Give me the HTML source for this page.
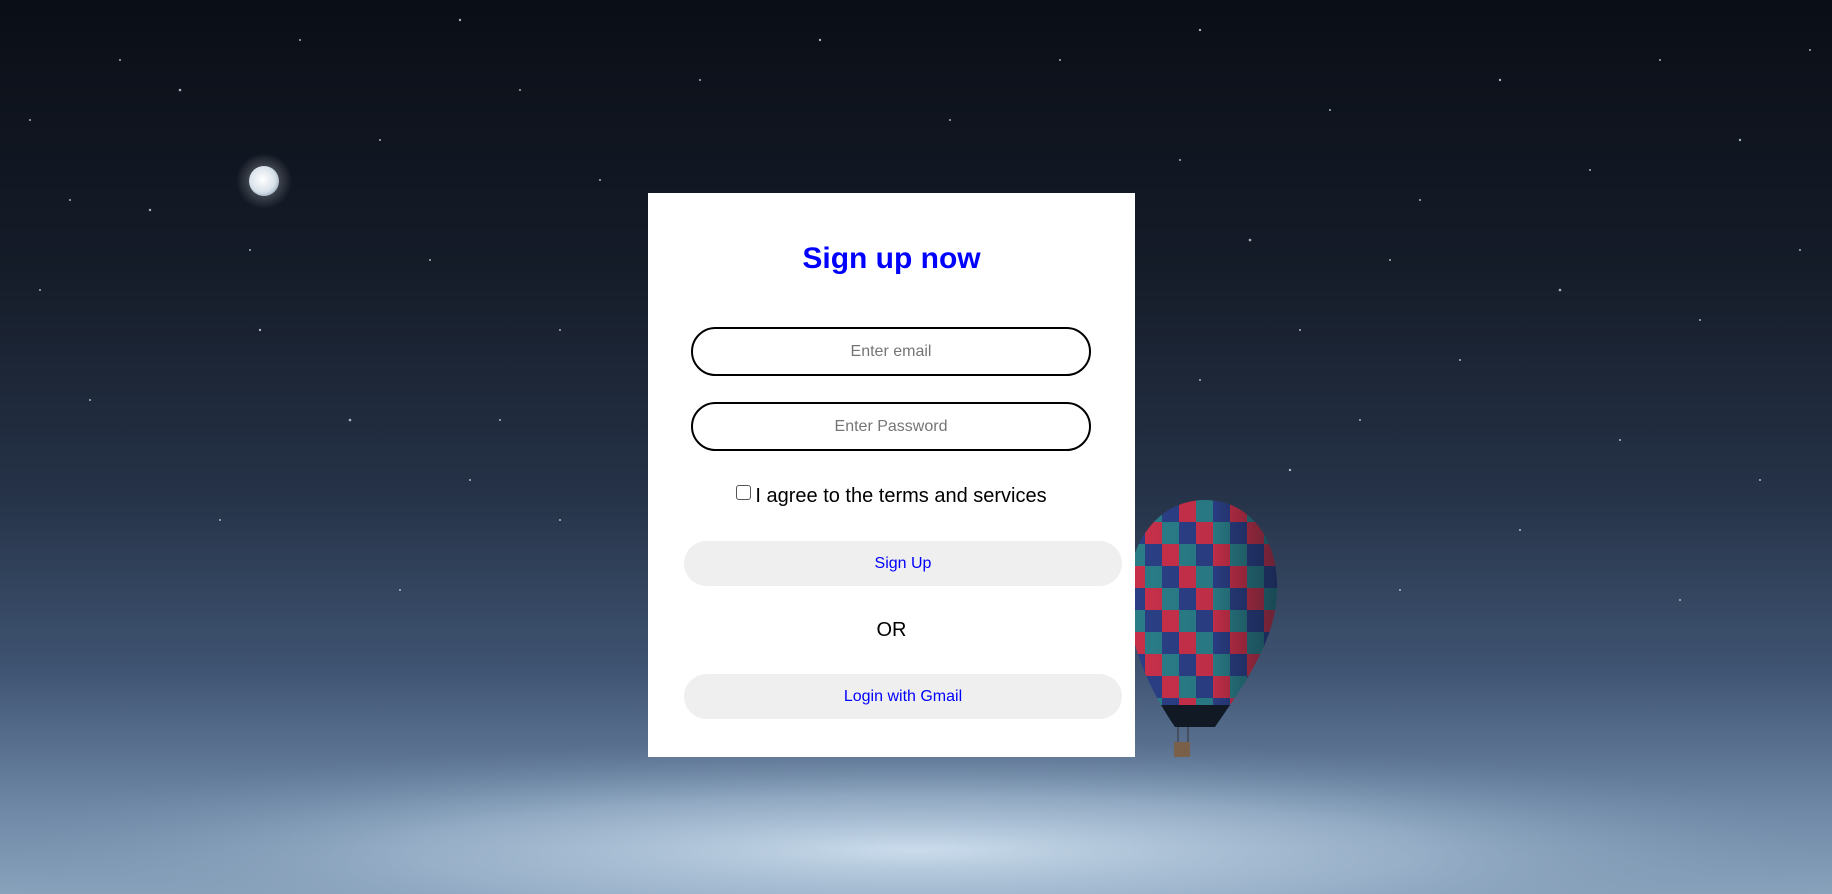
<!DOCTYPE html>
<html><head><meta charset="utf-8"><style>
html,body{margin:0;padding:0;width:1832px;height:894px;overflow:hidden;font-family:"Liberation Sans",Arial,sans-serif}
#bg{position:absolute;left:0;top:0;display:block}
.card{position:absolute;left:648px;top:193px;width:487px;height:564px;background:#fff}
h1{position:absolute;left:0;width:100%;margin:0;text-align:center;color:#0000ff;font-size:30px;font-weight:bold;line-height:36px}
.inp{position:absolute;left:43px;width:396px;height:45px;border:2px solid #000;border-radius:25px;text-align:center;line-height:45px;font-size:16px;color:#757575}
.chk{position:absolute;left:0;width:100%;text-align:center;font-size:20px;color:#000;line-height:24px}
.chk span.b{display:inline-block;width:13px;height:13px;border:1px solid #555;border-radius:3px;vertical-align:2px;margin-right:4px}
.btn{position:absolute;left:36px;width:438px;height:45px;background:#efefef;border-radius:23px;text-align:center;line-height:45px;font-size:16px;color:#0000ff}
.or{position:absolute;left:0;width:100%;top:425px;text-align:center;font-size:20px;line-height:24px;color:#000}
</style></head><body>
<svg id="bg" width="1832" height="894" viewBox="0 0 1832 894">
<defs>
<linearGradient id="sky" x1="0" y1="0" x2="0" y2="1">
<stop offset="0" stop-color="#0a0e16"/>
<stop offset="0.3" stop-color="#151c29"/>
<stop offset="0.55" stop-color="#253247"/>
<stop offset="0.75" stop-color="#3f5472"/>
<stop offset="0.9" stop-color="#6c86a4"/>
<stop offset="1" stop-color="#8aa3bd"/>
</linearGradient>
<radialGradient id="glow" cx="0.5" cy="0.5" r="0.5">
<stop offset="0" stop-color="#cfe0ef" stop-opacity="0.95"/>
<stop offset="0.5" stop-color="#a8bfd5" stop-opacity="0.6"/>
<stop offset="1" stop-color="#6c86a4" stop-opacity="0"/>
</radialGradient>
<radialGradient id="moon" cx="0.45" cy="0.45" r="0.6">
<stop offset="0" stop-color="#ffffff"/>
<stop offset="0.7" stop-color="#d9e2ea"/>
<stop offset="1" stop-color="#9fb0c0"/>
</radialGradient>
<radialGradient id="mglow" cx="0.5" cy="0.5" r="0.5">
<stop offset="0" stop-color="#ffffff" stop-opacity="0.4"/>
<stop offset="1" stop-color="#ffffff" stop-opacity="0"/>
</radialGradient>
<pattern id="chk" x="1128" y="500" width="51" height="66" patternUnits="userSpaceOnUse">
<rect x="0" y="0" width="17" height="22" fill="#c8304a"/><rect x="17" y="0" width="17" height="22" fill="#2a7d88"/><rect x="34" y="0" width="17" height="22" fill="#2b3f86"/>
<rect x="0" y="22" width="17" height="22" fill="#2b3f86"/><rect x="17" y="22" width="17" height="22" fill="#c8304a"/><rect x="34" y="22" width="17" height="22" fill="#2a7d88"/>
<rect x="0" y="44" width="17" height="22" fill="#2a7d88"/><rect x="17" y="44" width="17" height="22" fill="#2b3f86"/><rect x="34" y="44" width="17" height="22" fill="#c8304a"/>
</pattern>
<linearGradient id="shade" x1="0" y1="0" x2="1" y2="0">
<stop offset="0" stop-color="#000" stop-opacity="0"/>
<stop offset="0.55" stop-color="#000" stop-opacity="0.05"/>
<stop offset="1" stop-color="#0c1a2c" stop-opacity="0.6"/>
</linearGradient>
<clipPath id="env"><path d="M1205 500 C1250 500 1280 540 1277 595 C1274 645 1240 690 1215 727 L1175 727 C1150 690 1128 645 1128 595 C1128 540 1160 500 1205 500Z"/></clipPath>
</defs>
<rect width="1832" height="894" fill="url(#sky)"/>
<ellipse cx="916" cy="850" rx="1000" ry="110" fill="url(#glow)"/>
<g fill="#dfe7f0" opacity="0.75">
<circle cx="120" cy="60" r="1"/><circle cx="300" cy="40" r="1"/><circle cx="460" cy="20" r="1.2"/><circle cx="180" cy="90" r="1.3"/><circle cx="70" cy="200" r="1"/><circle cx="150" cy="210" r="1.2"/><circle cx="380" cy="140" r="1"/><circle cx="520" cy="90" r="1"/><circle cx="40" cy="290" r="1"/><circle cx="260" cy="330" r="1.2"/><circle cx="430" cy="260" r="1"/><circle cx="90" cy="400" r="1"/><circle cx="350" cy="420" r="1.3"/><circle cx="470" cy="480" r="1"/><circle cx="220" cy="520" r="1"/><circle cx="400" cy="590" r="1"/><circle cx="560" cy="330" r="1"/><circle cx="600" cy="180" r="1"/><circle cx="700" cy="80" r="1"/><circle cx="820" cy="40" r="1.2"/><circle cx="950" cy="120" r="1"/><circle cx="1060" cy="60" r="1"/><circle cx="1200" cy="30" r="1.2"/><circle cx="1180" cy="160" r="1"/><circle cx="1250" cy="240" r="1.3"/><circle cx="1330" cy="110" r="1"/><circle cx="1420" cy="200" r="1"/><circle cx="1500" cy="80" r="1.2"/><circle cx="1590" cy="170" r="1"/><circle cx="1660" cy="60" r="1"/><circle cx="1740" cy="140" r="1.2"/><circle cx="1800" cy="250" r="1"/><circle cx="1700" cy="320" r="1"/><circle cx="1560" cy="290" r="1.3"/><circle cx="1460" cy="360" r="1"/><circle cx="1360" cy="420" r="1"/><circle cx="1290" cy="470" r="1.2"/><circle cx="1620" cy="440" r="1"/><circle cx="1760" cy="480" r="1"/><circle cx="1520" cy="530" r="1"/><circle cx="1400" cy="590" r="1"/><circle cx="1680" cy="600" r="1"/><circle cx="1200" cy="380" r="1"/><circle cx="1300" cy="330" r="1"/><circle cx="30" cy="120" r="1"/><circle cx="560" cy="520" r="1"/><circle cx="500" cy="420" r="1"/><circle cx="250" cy="250" r="1"/><circle cx="1810" cy="50" r="1"/><circle cx="1390" cy="260" r="1"/>
</g>
<circle cx="264" cy="181" r="28" fill="url(#mglow)"/>
<circle cx="264" cy="181" r="15" fill="url(#moon)"/>
<g clip-path="url(#env)">
<rect x="1120" y="495" width="170" height="240" fill="url(#chk)"/>
<rect x="1120" y="495" width="170" height="240" fill="url(#shade)"/>
<rect x="1140" y="705" width="110" height="30" fill="#111a24"/>
</g>
<rect x="1174" y="742" width="16" height="15" fill="#7a6048"/>
<line x1="1178" y1="727" x2="1178" y2="742" stroke="#333" stroke-width="1"/>
<line x1="1188" y1="727" x2="1188" y2="742" stroke="#333" stroke-width="1"/>
</svg>
<div class="card">
<h1 style="top:48px">Sign up now</h1>
<div class="inp" style="top:134px">Enter email</div>
<div class="inp" style="top:209px">Enter Password</div>
<div class="chk" style="top:291px"><span class="b"></span>I agree to the terms and services</div>
<div class="btn" style="top:348px">Sign Up</div>
<div class="or">OR</div>
<div class="btn" style="top:481px">Login with Gmail</div>
</div>
</body></html>
